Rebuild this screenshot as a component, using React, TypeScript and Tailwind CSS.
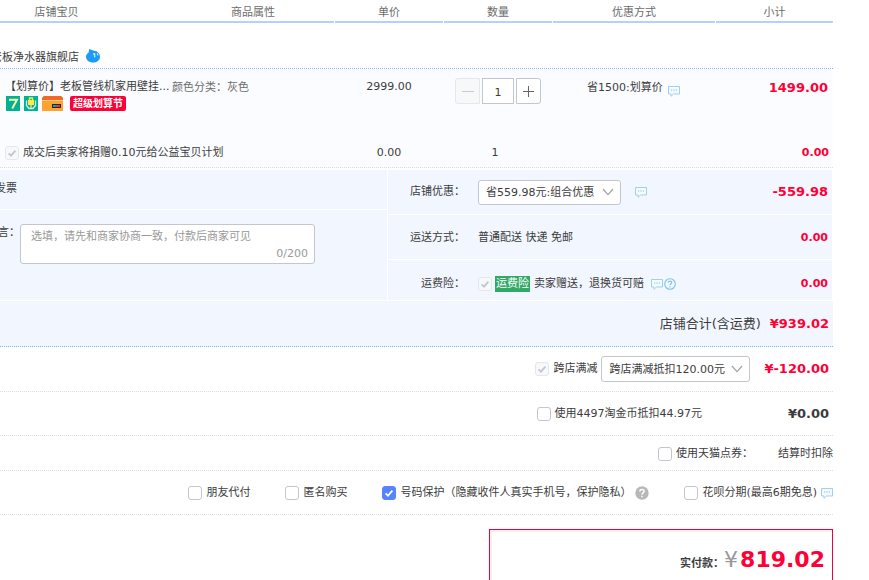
import type { ReactNode } from "react"

const cols = "grid grid-cols-[334fr_108fr_108fr_162fr_117fr] gap-x-px"

function Check({ id, checked, disabled }: { id: string; checked?: boolean; disabled?: boolean }) {
  return (
    <span className="relative block w-3.5 h-3.5 shrink-0">
      <input
        id={id}
        type="checkbox"
        defaultChecked={checked}
        disabled={disabled}
        className="peer block appearance-none w-3.5 h-3.5 rounded-[3px] border border-[#c4c6cf] bg-white checked:bg-[#5584ff] checked:border-[#5584ff] disabled:bg-[#f7f8fa] disabled:border-[#e6e7eb]"
      />
      <svg
        viewBox="0 0 14 14"
        className="hidden peer-checked:block absolute inset-0 w-3.5 h-3.5 pointer-events-none text-white peer-disabled:text-[#c4c6cf]"
      >
        <path d="M3.6 7.4 6 9.7 10.4 4.6" fill="none" stroke="currentColor" strokeWidth="1.8" />
      </svg>
    </span>
  )
}

function Option({ id, children, checked, disabled }: { id: string; children: ReactNode; checked?: boolean; disabled?: boolean }) {
  return (
    <div className="flex items-center gap-1">
      <Check id={id} checked={checked} disabled={disabled} />
      <label htmlFor={id} className="whitespace-nowrap">{children}</label>
    </div>
  )
}

function Picker({ id, label, text, className }: { id: string; label: string; text: string; className: string }) {
  return (
    <div className={`relative ${className}`}>
      <select id={id} aria-label={label} className="appearance-none w-full h-full rounded-[3px] border border-[#c4c6cf] bg-white pl-[7px] pr-6 pt-px">
        <option>{text}</option>
      </select>
      <svg viewBox="0 0 12 8" className="absolute right-[7px] top-1/2 -mt-1 w-3 h-2 pointer-events-none">
        <path d="M1 1 6 6.6 11 1" fill="none" stroke="#a0a2a8" strokeWidth="1.2" />
      </svg>
    </div>
  )
}

function Bubble() {
  return (
    <svg viewBox="0 0 12 12" className="w-3 h-3 shrink-0">
      <path d="M.5 1.5h11v7.500H5.500L3 11.300V9H.5z" fill="#f4faff" stroke="#9fd0f0" />
      <path d="M3 5h1.200M5.400 5h1.200M7.800 5H9" stroke="#86bfe6" strokeWidth="1.100" />
    </svg>
  )
}

function ShopRow({ label, amount, className, children }: { label: string; amount: ReactNode; className: string; children: ReactNode }) {
  return (
    <div className={`flex items-center bg-[#f2f7ff] pr-1 ${className}`}>
      <div className="w-[77px] text-right shrink-0">{label}</div>
      <div className="flex items-center ml-[13px]">{children}</div>
      <div className="ml-auto font-bold text-[#ff0036]">{amount}</div>
    </div>
  )
}

export default function App() {
  return (
    <div className="min-h-screen flex flex-col overflow-hidden bg-white pr-9 text-[11px] leading-4 text-[#3c3c3c] font-['DejaVu_Sans','Noto_Sans_CJK_SC',sans-serif]">
      <div className={`${cols} text-center text-[#6c6c6c]`}>
        <div className="flex h-[23px] pt-[5px] border-b-2 border-[#b2d1ff]">
          <div className="w-[113px]">店铺宝贝</div>
          <div className="flex-1 pl-[59px]">商品属性</div>
        </div>
        <div className="pt-[5px] border-b-2 border-[#b2d1ff]">单价</div>
        <div className="pt-[5px] border-b-2 border-[#b2d1ff]">数量</div>
        <div className="pt-[5px] border-b-2 border-[#b2d1ff]">优惠方式</div>
        <div className="pt-[5px] border-b-2 border-[#b2d1ff]">小计</div>
      </div>

      <div className="flex items-end h-[46px] pb-0.5 border-b border-dotted border-[#80b2ff]">
        <a href="#" className="-ml-[9px]">老板净水器旗舰店</a>
        <svg viewBox="0 0 14 14" className="w-3.5 h-3.5 ml-[7px] mb-[3px]">
          <path d="M3.2 0 8 1.8C11.5 2 14 4.6 14 7.8 14 11.3 11 13.6 7 13.6S0 11.3 0 7.6C0 5.6 1.4 4.4 2.6 3.5z" fill="#1c9cf8" />
          <path d="M7 5.2 8.6 4.8 8.8 8.4M11.3 4.4l.6 2" fill="none" stroke="#d5eeff" strokeWidth="1.2" />
        </svg>
      </div>

      <div className="bg-[#fbfcff] pt-[9px] pb-1.5 border-b border-dotted border-[#ddd]">
        <div className={`${cols} h-[67px]`}>
          <div className="flex pt-px">
            <div className="w-[172px] pl-[5px]">
              <a href="#" className="block whitespace-nowrap">【划算价】老板管线机家用壁挂...</a>
              <div className="flex mt-px pl-px">
                <svg viewBox="0 0 14 15" className="w-3.5 h-[15px]">
                  <path d="M0 0h14v15H0z" fill="#00b194" />
                  <path d="M3 3.8h8L6.2 12.5" fill="none" stroke="#fff9a8" strokeWidth="2" />
                </svg>
                <svg viewBox="0 0 14 15" className="w-3.5 h-[15px] ml-1">
                  <path d="M0 0h14v15H0z" fill="#00b194" />
                  <path d="M4 4h6v5H4z" fill="#ffe94a" />
                  <path d="M5.5 4V2h3v2M7 9v3" fill="none" stroke="#ffe94a" strokeWidth="1.3" />
                  <path d="M2.5 4.5v5l2.5 3h4l2.5-3v-5" fill="none" stroke="#c9f5e5" strokeWidth="1.3" />
                </svg>
                <svg viewBox="0 0 21 15" className="w-[21px] h-[15px] ml-1">
                  <path d="M2 0h17l2 2v13H0V2z" fill="#ffa22e" />
                  <path d="M2 0h17l2 2v2H0V2z" fill="#f4672a" />
                  <path d="M0 4h21v1H0z" fill="#ffd27a" />
                  <path d="M10 8h9v4h-9z" fill="#26252c" />
                  <path d="M11 9h2v2h-2z" fill="#1f9ce0" />
                  <path d="M13 9h2v2h-2z" fill="#2a9c48" />
                  <path d="M15 9h3v2h-3z" fill="#e33" />
                </svg>
                <span className="ml-[7px] h-[15px] px-[3px] rounded-[2px] bg-[#ff0036] text-white text-[10px] leading-[15px] font-bold whitespace-nowrap">超级划算节</span>
              </div>
            </div>
            <div className="text-[#6c6c6c] whitespace-nowrap pt-px">颜色分类：灰色</div>
          </div>
          <div className="text-center pt-px">2999.00</div>
          <div className="flex gap-0.5 pl-[11px]">
            <button disabled aria-label="减少" className="w-[25px] h-[26px] border border-[#e6e7eb] bg-[#f7f8fa] rounded-l-[3px] flex items-center justify-center">
              <span className="w-3 h-px bg-[#ccc]" />
            </button>
            <input aria-label="数量" defaultValue="1" className="w-8 h-[26px] border border-[#c4c6cf] bg-white text-center pt-0.5" />
            <button aria-label="增加" className="w-[25px] h-[26px] border border-[#c4c6cf] bg-white rounded-r-[3px] flex items-center justify-center">
              <svg viewBox="0 0 11 11" className="w-[11px] h-[11px]">
                <path d="M0 5.5h11M5.5 0v11" stroke="#666" />
              </svg>
            </button>
          </div>
          <div className="flex pt-0.5 pl-[34px] whitespace-nowrap">
            省1500:划算价
            <div className="ml-[5px] pt-[5px]"><Bubble /></div>
          </div>
          <div className="text-right pr-[5px] pt-0.5 text-[13px] font-bold text-[#ff0036]">1499.00</div>
        </div>
        <div className={cols}>
          <div className="pl-[5px]">
            <Option id="donate" checked disabled>成交后卖家将捐赠0.10元给公益宝贝计划</Option>
          </div>
          <div className="text-center">0.00</div>
          <div className="text-center pr-1.5">1</div>
          <div />
          <div className="text-right pr-1 font-bold text-[#ff0036]">0.00</div>
        </div>
      </div>

      <div className="flex gap-px mt-0.5 pr-px">
        <div className="w-[387px] flex flex-col gap-px">
          <div className="h-[39px] bg-[#f2f7ff] pt-[11px]"><div className="-ml-[5px]">发票</div></div>
          <div className="flex-1 flex bg-[#f2f7ff] pt-3.5">
            <label htmlFor="note" className="-ml-[13px] w-[33px] shrink-0 whitespace-nowrap pt-px">留言：</label>
            <div className="relative w-[295px] h-10">
              <textarea
                id="note"
                placeholder="选填，请先和商家协商一致，付款后商家可见"
                className="block w-full h-full resize-none overflow-hidden rounded-[3px] border border-[#c4c6cf] bg-white px-2.5 pt-1 placeholder:text-[#999]"
              />
              <span className="absolute right-[7px] bottom-0.5 text-[#999]">0/200</span>
            </div>
          </div>
        </div>
        <div className="flex-1 flex flex-col gap-px">
          <ShopRow label="店铺优惠：" className="h-11" amount={<span className="text-[13px]">-559.98</span>}>
            <Picker id="coupon" label="店铺优惠" text="省559.98元:组合优惠" className="w-[143px] h-[25px] mr-3.5" />
            <Bubble />
          </ShopRow>
          <ShopRow label="运送方式：" className="h-11 pt-px" amount="0.00">普通配送 快递 免邮</ShopRow>
          <ShopRow label="运费险：" className="h-10 pt-[7px]" amount="0.00">
            <Check id="insure" checked disabled />
            <label htmlFor="insure" className="flex ml-[3px] mr-[7px] whitespace-nowrap">
              <span className="bg-[#33a968] text-white px-px leading-[15px] mr-1">运费险</span>
              卖家赠送，退换货可赔
            </label>
            <Bubble />
            <svg viewBox="0 0 12 12" className="w-3 h-3 ml-px">
              <circle cx="6" cy="6" r="5.3" fill="#f4faff" stroke="#7fc0ea" strokeWidth="1.1" />
              <path d="M4.3 4.8C4.3 2.5 7.8 2.6 7.8 4.6 7.8 5.8 6 5.8 6 7.2M6 8.2v1.2" fill="none" stroke="#7fc0ea" strokeWidth="1.2" />
            </svg>
          </ShopRow>
        </div>
      </div>

      <div className="flex items-center justify-end gap-[9px] h-[46px] mt-px pr-1 bg-[#f2f7ff] border-b border-dotted border-[#80b2ff] text-[13px]">
        <span>店铺合计(含运费)</span>
        <b className="text-[#ff0036]">¥939.02</b>
      </div>

      <div className="flex items-center justify-end h-[45px] pr-1 border-b border-dotted border-[#ddd]">
        <Option id="cross" checked disabled>跨店满减</Option>
        <Picker id="crossPick" label="跨店满减" text="跨店满减抵扣120.00元" className="w-[149px] h-[26px] ml-1 mr-3.5" />
        <b className="text-[13px] text-[#ff0036]">¥-120.00</b>
      </div>

      <div className="flex items-center justify-end h-11 pr-1 border-b border-dotted border-[#ddd]">
        <Option id="coin">使用4497淘金币抵扣44.97元</Option>
        <b className="w-[127px] text-right text-[13px]">¥0.00</b>
      </div>

      <div className="flex items-center justify-end h-[35px] gap-[25px] pt-px border-b border-dotted border-[#ddd]">
        <Option id="points">使用天猫点券：</Option>
        <span>结算时扣除</span>
      </div>

      <div className="flex items-center justify-end h-11 gap-[35px] pt-px border-b border-dotted border-[#ddd]">
        <Option id="friend">朋友代付</Option>
        <Option id="anon">匿名购买</Option>
        <div className="flex items-center gap-1">
          <Option id="protect" checked>号码保护（隐藏收件人真实手机号，保护隐私）</Option>
          <svg viewBox="0 0 14 14" className="w-3.5 h-3.5">
            <circle cx="7" cy="7" r="6.7" fill="#b8b8b8" />
            <path d="M4.9 5.5C4.9 2.8 9.1 2.9 9.1 5.3 9.1 6.8 7 6.8 7 8.5M7 9.7v1.6" fill="none" stroke="#fff" strokeWidth="1.5" />
          </svg>
        </div>
        <div className="flex items-center gap-1">
          <Option id="huabei">花呗分期(最高6期免息)</Option>
          <Bubble />
        </div>
      </div>

      <div className="self-end flex-1 flex flex-col w-[344px] mt-3.5 border border-b-0 border-[#f0003c]">
        <div className="flex-1 border-t-2 border-l-2 border-[#ffefea] pt-3 pr-[7px]">
          <div className="flex items-baseline justify-end">
            <b>实付款：</b>
            <span className="text-[22px] leading-8 text-[#999] mr-0.5">¥</span>
            <b className="text-[22px] leading-8 text-[#ff0036]">819.02</b>
          </div>
        </div>
      </div>
    </div>
  )
}
